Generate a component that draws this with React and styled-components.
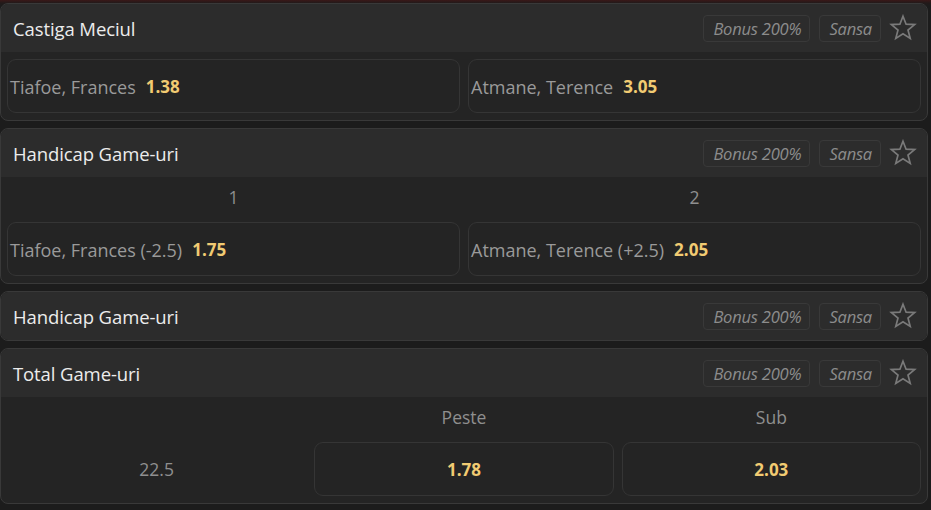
import React from "react";
import styled, { createGlobalStyle } from "styled-components";

const GlobalStyle = createGlobalStyle`
  html, body {
    margin: 0;
    padding: 0;
    background: #1c1c1c;
    font-family: "Open Sans", "Noto Sans", Arial, sans-serif;
  }
  * { box-sizing: border-box; }
`;

const Page = styled.div`
  width: 931px;
  min-height: 510px;
  padding-top: 3px;
  background: linear-gradient(to bottom, #3a1818 0px, #221a1a 3px, #1c1c1c 6px);
`;

const Card = styled.section`
  margin: 0 3px 7px 0;
  border: 1px solid #393939;
  border-radius: 8px;
  background: #242424;
  overflow: hidden;
`;

const Header = styled.div`
  height: 48px;
  display: flex;
  align-items: center;
  padding: 0 10px 0 12px;
  background: #2c2c2c;
`;

const Title = styled.h3`
  margin: 0;
  flex: 1;
  font-size: 18.5px;
  font-weight: 400;
  color: #ececec;
  letter-spacing: -0.1px;
`;

const Badge = styled.span`
  height: 27px;
  display: inline-flex;
  align-items: center;
  padding: 0 8px 0 9px;
  margin-right: 9px;
  border: 1px solid #393939;
  border-radius: 4px;
  font-size: 16.5px;
  font-style: italic;
  color: #8c8c8c;
  letter-spacing: -0.2px;
`;

const StarButton = styled.span`
  display: inline-flex;
  width: 28px;
  height: 28px;
  margin-left: -1px;
`;

const Body = styled.div`
  padding: 0 6px 7px 6px;
`;

const Grid = styled.div`
  display: grid;
  grid-template-columns: repeat(${(p) => p.$cols}, 1fr);
  column-gap: 8px;
`;

const ColLabel = styled.div`
  height: 45px;
  padding-bottom: 6px;
  display: flex;
  align-items: center;
  justify-content: center;
  font-size: 17.5px;
  color: #8f8f8f;
`;

const Odd = styled.button`
  height: 54px;
  display: flex;
  align-items: center;
  justify-content: ${(p) => (p.$center ? "center" : "flex-start")};
  gap: 10px;
  padding: 1px 2px 0;
  margin-top: ${(p) => (p.$first ? "7px" : "0")};
  background: #242424;
  border: 1px solid #353535;
  border-radius: 9px;
  font-family: inherit;
  cursor: pointer;
`;

const Name = styled.span`
  font-size: 18px;
  color: #9a9a9a;
`;

const Price = styled.span`
  font-size: 17px;
  color: #f1cb72;
  font-weight: 700;
`;

const Line = styled.div`
  height: 54px;
  display: flex;
  align-items: center;
  justify-content: center;
  font-size: 17.5px;
  color: #8f8f8f;
`;

const Star = () => (
  <svg width="28" height="28" viewBox="0 0 28 28" fill="none">
    <path
      d="M14 2.2 L17.1 10.2 L25.6 10.6 L19 16 L21.2 24.4 L14 19.7 L6.8 24.4 L9 16 L2.4 10.6 L10.9 10.2 Z"
      stroke="#7a7a7a"
      strokeWidth="1.7"
      strokeLinejoin="miter"
    />
  </svg>
);

const MarketHeader = ({ title }) => (
  <Header>
    <Title>{title}</Title>
    <Badge>Bonus 200%</Badge>
    <Badge>Sansa</Badge>
    <StarButton>
      <Star />
    </StarButton>
  </Header>
);

export default function App() {
  return (
    <>
      <GlobalStyle />
      <Page>
        <Card>
          <MarketHeader title="Castiga Meciul" />
          <Body>
            <Grid $cols={2}>
              <Odd $first>
                <Name>Tiafoe, Frances</Name>
                <Price>1.38</Price>
              </Odd>
              <Odd $first>
                <Name>Atmane, Terence</Name>
                <Price>3.05</Price>
              </Odd>
            </Grid>
          </Body>
        </Card>

        <Card>
          <MarketHeader title="Handicap Game-uri" />
          <Body>
            <Grid $cols={2}>
              <ColLabel>1</ColLabel>
              <ColLabel>2</ColLabel>
              <Odd>
                <Name>Tiafoe, Frances (-2.5)</Name>
                <Price>1.75</Price>
              </Odd>
              <Odd>
                <Name>Atmane, Terence (+2.5)</Name>
                <Price>2.05</Price>
              </Odd>
            </Grid>
          </Body>
        </Card>

        <Card>
          <MarketHeader title="Handicap Game-uri" />
        </Card>

        <Card>
          <MarketHeader title="Total Game-uri" />
          <Body>
            <Grid $cols={3}>
              <ColLabel />
              <ColLabel>Peste</ColLabel>
              <ColLabel>Sub</ColLabel>
              <Line>22.5</Line>
              <Odd $center>
                <Price>1.78</Price>
              </Odd>
              <Odd $center>
                <Price>2.03</Price>
              </Odd>
            </Grid>
          </Body>
        </Card>
      </Page>
    </>
  );
}
